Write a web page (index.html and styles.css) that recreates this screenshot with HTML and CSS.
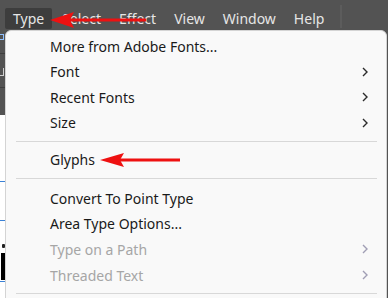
FILE: index.html
```html
<!DOCTYPE html>
<html>
<head>
<meta charset="utf-8">
<link rel="stylesheet" href="styles.css">
</head>
<body>
<div class="app">
  <div class="menubar">
    <span class="mb-item active">Type</span>
    <span class="mb-item">Select</span>
    <span class="mb-item">Effect</span>
    <span class="mb-item">View</span>
    <span class="mb-item">Window</span>
    <span class="mb-item">Help</span>
    <span class="mb-divider"></span>
  </div>
  <div class="workspace">
    <div class="side">
      <div class="side-dark">
        <div class="sd-line l1"></div>
        <div class="sd-icon i1"></div>
        <div class="sd-line l2"></div>
        <div class="sd-icon i2"></div>
      </div>
      <div class="side-light">
        <div class="bl b1"></div>
        <div class="bl b2"></div>
        <div class="dot"></div>
        <div class="bar"></div>
        <div class="bl b3"></div>
      </div>
    </div>
  </div>

  <div class="menu">
    <div class="row">More from Adobe Fonts...</div>
    <div class="row sub">Font<svg class="chev" viewBox="0 0 6 10" width="6" height="10"><path d="M1 1 L5 5 L1 9" fill="none" stroke="#2b2b2b" stroke-width="1.4"/></svg></div>
    <div class="row sub">Recent Fonts<svg class="chev" viewBox="0 0 6 10" width="6" height="10"><path d="M1 1 L5 5 L1 9" fill="none" stroke="#2b2b2b" stroke-width="1.4"/></svg></div>
    <div class="row sub">Size<svg class="chev" viewBox="0 0 6 10" width="6" height="10"><path d="M1 1 L5 5 L1 9" fill="none" stroke="#2b2b2b" stroke-width="1.4"/></svg></div>
    <div class="sep"></div>
    <div class="row">Glyphs</div>
    <div class="sep sep2"></div>
    <div class="row">Convert To Point Type</div>
    <div class="row">Area Type Options...</div>
    <div class="row sub disabled">Type on a Path<svg class="chev" viewBox="0 0 6 10" width="6" height="10"><path d="M1 1 L5 5 L1 9" fill="none" stroke="#a09eb4" stroke-width="1.4"/></svg></div>
    <div class="row sub disabled">Threaded Text<svg class="chev" viewBox="0 0 6 10" width="6" height="10"><path d="M1 1 L5 5 L1 9" fill="none" stroke="#a09eb4" stroke-width="1.4"/></svg></div>
    <div class="sep"></div>
  </div>

  <svg class="arrow a1" width="150" height="20" viewBox="0 0 150 20">
    <path d="M66 10 H146" stroke="#ee1111" stroke-width="3.2" fill="none"/>
    <path d="M50 10 L74 2 L70 10 L74 18 Z" fill="#ee1111"/>
  </svg>
  <svg class="arrow a2" width="100" height="20" viewBox="0 0 100 20">
    <path d="M18 10 H80" stroke="#ee1111" stroke-width="3.2" fill="none"/>
    <path d="M0 10 L24 3 L20 10 L24 17 Z" fill="#ee1111"/>
  </svg>
</div>
</body>
</html>
```
FILE: styles.css
```css
* { box-sizing: border-box; }
html, body { margin: 0; padding: 0; }
body {
  width: 388px;
  height: 298px;
  overflow: hidden;
  background: #535353;
  font-family: "Noto Sans", "Open Sans", sans-serif;
}
.app {
  position: relative;
  width: 388px;
  height: 298px;
}
.menubar {
  height: 30px;
  background: #535353;
  display: flex;
  align-items: flex-end;
  padding-left: 5px;
  padding-bottom: 1px;
}
.mb-item {
  color: #e6e6e6;
  font-size: 14px;
  line-height: 21px;
  height: 21px;
  padding: 0 8px;
  margin-right: 2px;
  border-radius: 2px;
}
.mb-item.active {
  background: #3d3d3d;
}
.mb-divider {
  width: 2px;
  height: 23px;
  background: #5c5c5c;
  margin-left: 6px;
  align-self: flex-start;
  margin-top: 5px;
}
.workspace {
  height: 268px;
  display: flex;
}
.side {
  width: 6px;
  display: flex;
  flex-direction: column;
}
.side-dark {
  height: 85px;
  background: #535353;
  position: relative;
}
.side-light {
  flex: 1;
  background: #ffffff;
  position: relative;
}
.sd-line { position: absolute; left: 0; width: 6px; height: 1px; background: #3e3e3e; }
.sd-line.l1 { top: 23px; }
.sd-line.l2 { top: 57px; }
.sd-icon { position: absolute; left: 0; }
.sd-icon.i1 { top: 4px; width: 4px; height: 6px; border: 1px solid #8fc0ff; border-left: none; }
.sd-icon.i2 { top: 38px; width: 4px; height: 8px; border-right: 1px solid #cfcfcf; border-bottom: 1px solid #cfcfcf; }
.bl { position: absolute; left: 0; width: 5px; height: 1px; background: #3b82d6; }
.bl.b1 { top: 66px; }
.bl.b2 { top: 105px; }
.bl.b3 { top: 166px; }
.dot { position: absolute; left: 2px; top: 129px; width: 3px; height: 4px; background: #222; border-radius: 1px; }
.bar { position: absolute; left: 1px; top: 138px; width: 4px; height: 27px; background: #000; }

.menu {
  position: absolute;
  left: 5px;
  top: 30px;
  width: 382px;
  height: 280px;
  background: #f9f9f9;
  border: 1px solid #d4d4d4;
  border-radius: 6px 6px 0 0;
  padding-top: 2.2px;
}
.row {
  height: 25.65px;
  display: flex;
  align-items: center;
  padding-left: 44px;
  padding-right: 18px;
  font-size: 14px;
  color: #1a1a1a;
}
.row.sub { justify-content: space-between; }
.row.disabled { color: #a6a6a6; }
.chev { display: block; }
.sep {
  height: 1px;
  background: #d8d8d8;
  margin: 5.2px 9px 5.2px 10px;
}
.sep.sep2 { margin-bottom: 6.4px; }
.arrow { position: absolute; }
.arrow.a1 { left: 0; top: 10px; }
.arrow.a2 { left: 100px; top: 150px; }
```
